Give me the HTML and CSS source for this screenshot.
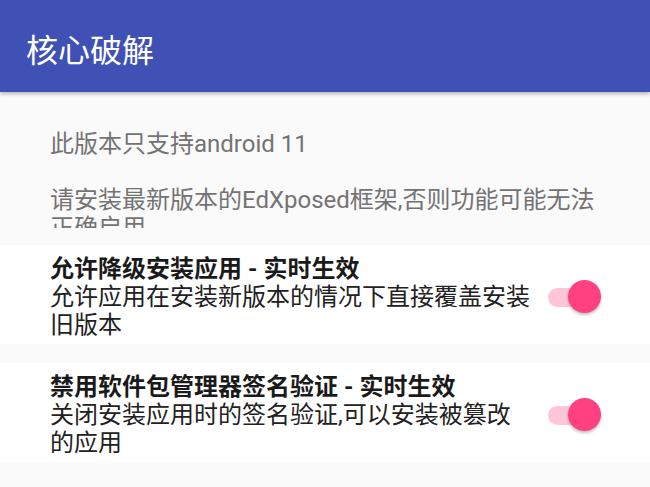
FILE: index.html
```html
<!DOCTYPE html>
<html>
  <head>
    <meta charset="utf-8">
    <title>核心破解</title>
    <link rel="stylesheet" href="styles.css">
  </head>
  <body>
    <header class="toolbar">
      <h1 class="toolbar-title">核心破解</h1>
    </header>

    <div class="notice">
      <p class="notice-text">此版本只支持android 11<br><br>请安装最新版本的EdXposed框架,否则功能可能无法正确启用</p>
    </div>

    <ul class="prefs">
      <li class="pref">
        <div class="pref-text">
          <div class="pref-title">允许降级安装应用 - 实时生效</div>
          <div class="pref-summary">允许应用在安装新版本的情况下直接覆盖安装旧版本</div>
        </div>
        <span class="switch on"><span class="switch-thumb"></span></span>
      </li>
      <li class="pref">
        <div class="pref-text">
          <div class="pref-title">禁用软件包管理器签名验证 - 实时生效</div>
          <div class="pref-summary">关闭安装应用时的签名验证,可以安装被篡改的应用</div>
        </div>
        <span class="switch on"><span class="switch-thumb"></span></span>
      </li>
    </ul>
  </body>
</html>
```

FILE: styles.css
```css
body {
  margin: 0;
  background: #fafafa;
  font-family: Roboto, "Noto Sans CJK SC", sans-serif;
  overflow: hidden;
}

.toolbar {
  position: relative;
  z-index: 1;
  height: 92px;
  background: #3f51b5;
  display: flex;
  align-items: center;
  padding: 3px 0 0 26px;
  box-sizing: border-box;
  box-shadow: 0 2px 4px rgba(0, 0, 0, 0.28);
}

.toolbar-title {
  margin: 0;
  color: #fff;
  font-size: 32px;
  font-weight: 400;
}

.notice {
  padding: 38px 50px 0;
  margin-bottom: 17px;
}

.notice-text {
  margin: 0;
  height: 98px;
  overflow: hidden;
  color: #737373;
  font-size: 24px;
  line-height: 28px;
}

.prefs {
  list-style: none;
  margin: 0;
  padding: 0;
  display: flex;
  flex-direction: column;
  gap: 19px;
}

.pref {
  background: #fff;
  display: flex;
  align-items: center;
  gap: 16px;
  padding: 10px 49px 5px 50px;
}

.pref-text {
  flex: 1;
  font-size: 24px;
  line-height: 28px;
}

.pref-title {
  color: #1a1a1a;
  font-weight: 700;
}

.pref-summary {
  color: #212121;
}

.switch {
  position: relative;
  width: 53px;
  height: 34px;
  flex: none;
  display: flex;
  align-items: center;
}

.switch::before {
  content: "";
  width: 48px;
  height: 19px;
  border-radius: 10px;
  background: #ffc5d9;
}

.switch-thumb {
  position: absolute;
  right: 0;
  top: 0;
  width: 33px;
  height: 33px;
  border-radius: 50%;
  background: #ff4081;
  box-shadow: 0 2px 3px rgba(0, 0, 0, 0.25);
}
```
